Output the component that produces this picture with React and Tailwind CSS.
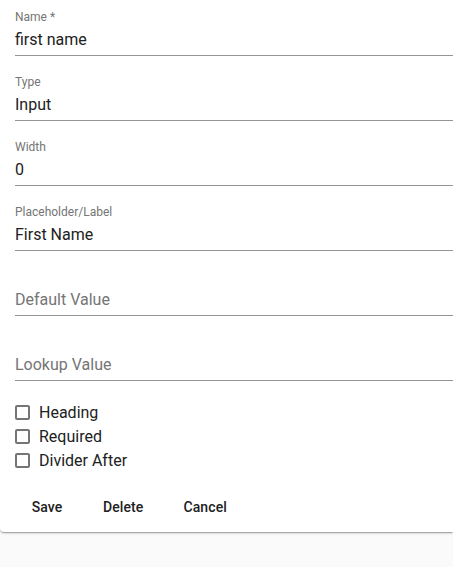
import React from 'react';

const fields = [
  { label: 'Name *', value: 'first name' },
  { label: 'Type', value: 'Input' },
  { label: 'Width', value: '0' },
  { label: 'Placeholder/Label', value: 'First Name' },
  { label: 'Default Value', value: '' },
  { label: 'Lookup Value', value: '' },
];

const checks = ['Heading', 'Required', 'Divider After'];

// 下線付きのテキストフィールド（値が空ならラベルを入力欄に表示）
const Field = ({ label, value }) => (
  <div className="flex flex-col">
    <div className="h-[16px] pt-[1px] text-[12px] leading-[12px] text-[#757575]">
      {value ? label : ''}
    </div>
    <div className="h-[30px] pt-[4px] border-b border-[#949494] text-[16px] leading-[19px]">
      {value ? (
        <span className="text-[#212121]">{value}</span>
      ) : (
        <span className="text-[#757575]">{label}</span>
      )}
    </div>
  </div>
);

const App = () => {
  return (
    <div className="min-h-[567px] bg-[#fafafa] font-['Roboto','Liberation_Sans',sans-serif]">
      <div className="bg-white rounded-bl-[4px] shadow-[0_1px_3px_rgba(0,0,0,0.2),0_1px_1px_rgba(0,0,0,0.14),0_2px_1px_-1px_rgba(0,0,0,0.12)] pb-[7px]">
        <div className="pl-[15px] pt-[10px] flex flex-col gap-[19px]">
          {fields.map((f) => (
            <Field key={f.label} label={f.label} value={f.value} />
          ))}
        </div>

        <div className="pl-[15px] pt-[19px] flex flex-col">
          {checks.map((c) => (
            <label key={c} className="h-[24px] flex items-center gap-[9px]">
              <span className="w-[15px] h-[15px] border-2 border-[#757575] rounded-[2px] shrink-0" />
              <span className="text-[16px] leading-[19px] text-[#212121]">{c}</span>
            </label>
          ))}
        </div>

        <div className="pl-[15px] pt-[17px] flex gap-[8px]">
          {['Save', 'Delete', 'Cancel'].map((b) => (
            <button
              key={b}
              className="h-[36px] min-w-[64px] px-[16px] rounded-[4px] text-[14px] font-medium tracking-[0.1px] text-[#212121]"
            >
              {b}
            </button>
          ))}
        </div>
      </div>
    </div>
  );
};

export default App;
